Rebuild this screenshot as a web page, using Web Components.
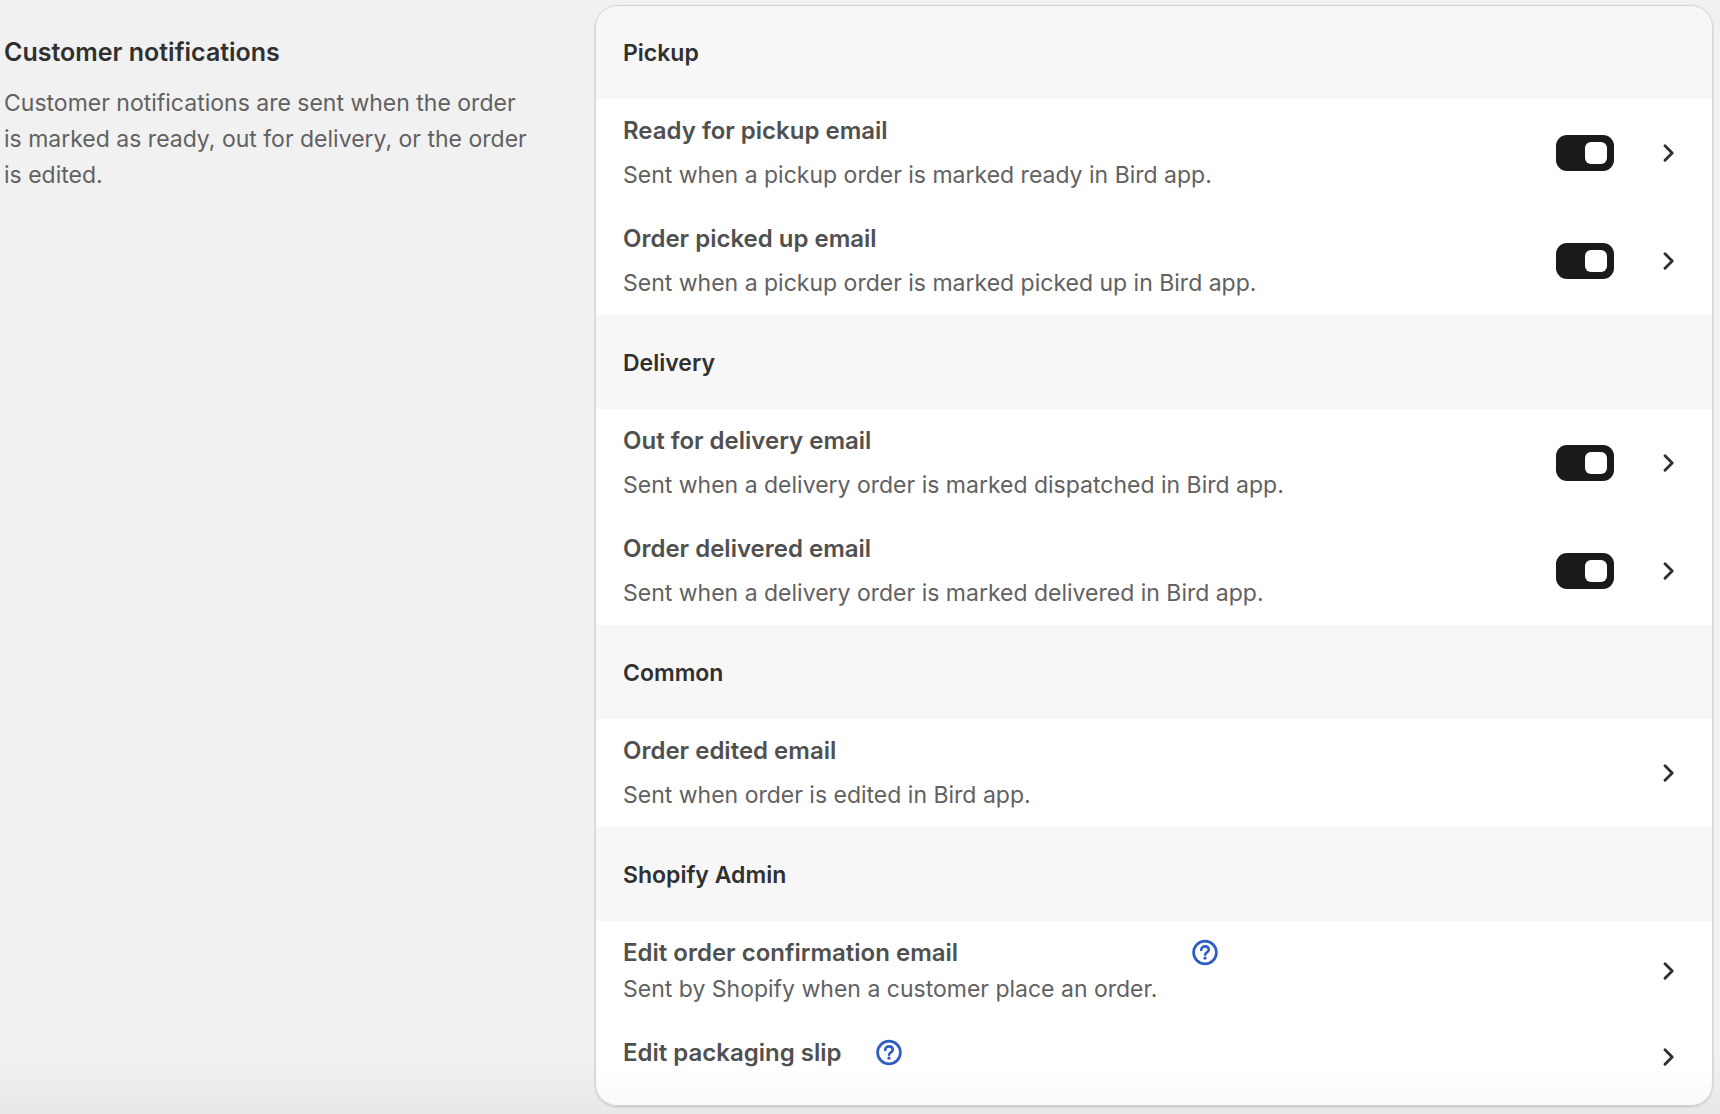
<!DOCTYPE html>
<html lang="en">
<head>
<meta charset="utf-8">
<title>Customer notifications</title>
<style>
  html { height: 100%; }
  body {
    margin: 0;
    min-height: 100%;
    box-sizing: border-box;
    background: linear-gradient(to top, #e8e8e8, #f1f1f1 56px);
    font: 400 23px/36px Inter, "Liberation Sans", sans-serif;
    color: #616161;
  }
</style>
</head>
<body>
<notification-settings>
  <span slot="heading">Customer notifications</span>
  <span slot="summary">Customer notifications are sent when the order is marked as ready, out for delivery, or the order is edited.</span>
  <notification-group>
    <span slot="heading">Pickup</span>
    <notification-row label="Ready for pickup email" toggle>Sent when a pickup order is marked ready in Bird app.</notification-row>
    <notification-row label="Order picked up email" toggle>Sent when a pickup order is marked picked up in Bird app.</notification-row>
  </notification-group>
  <notification-group>
    <span slot="heading">Delivery</span>
    <notification-row label="Out for delivery email" toggle>Sent when a delivery order is marked dispatched in Bird app.</notification-row>
    <notification-row label="Order delivered email" toggle>Sent when a delivery order is marked delivered in Bird app.</notification-row>
  </notification-group>
  <notification-group>
    <span slot="heading">Common</span>
    <notification-row label="Order edited email">Sent when order is edited in Bird app.</notification-row>
  </notification-group>
  <notification-group>
    <span slot="heading">Shopify Admin</span>
    <notification-row label="Edit order confirmation email" help>Sent by Shopify when a customer place an order.</notification-row>
    <notification-row label="Edit packaging slip" help></notification-row>
  </notification-group>
</notification-settings>

<script>
  class NotificationSettings extends HTMLElement {
    constructor() {
      super();
      this.attachShadow({ mode: "open" }).innerHTML = `
        <style>
          :host { display: block; }
          main {
            display: grid;
            grid-template-columns: minmax(0, 1fr) minmax(0, 2fr);
            column-gap: 32px;
            padding: 5px 7px 8px 4px;
          }
          aside { padding: 29px 28px 0 0; }
          h2 { margin: 0 0 15px; font-size: 25px; line-height: 36px; font-weight: 600; color: #303030; }
          p { margin: 0; }
          .card {
            background: linear-gradient(to top, #fafafa, #fff 40px);
            border-radius: 22px;
            overflow: hidden;
            padding-bottom: 13px;
            outline: 1px solid #d4d4d4;
            outline-offset: -1px;
            box-shadow: 0 1px 2px #bdbdbd;
          }
        </style>
        <main>
          <aside>
            <h2><slot name="heading"></slot></h2>
            <p><slot name="summary"></slot></p>
          </aside>
          <section class="card"><slot></slot></section>
        </main>`;
    }
  }

  class NotificationGroup extends HTMLElement {
    constructor() {
      super();
      this.attachShadow({ mode: "open" }).innerHTML = `
        <style>
          :host { display: block; }
          h3 {
            margin: 0;
            padding: 30px 28px 28px;
            background: #f7f7f7;
            color: #303030;
            font-size: 23px;
            line-height: 36px;
            font-weight: 600;
          }
        </style>
        <h3><slot name="heading"></slot></h3>
        <slot></slot>`;
    }
  }

  class ToggleSwitch extends HTMLElement {
    constructor() {
      super();
      this.attachShadow({ mode: "open" }).innerHTML = `
        <style>
          :host { display: flex; }
          input {
            appearance: none;
            display: flex;
            align-items: center;
            box-sizing: border-box;
            width: 58px;
            height: 36px;
            margin: 0;
            padding: 0 7px;
            border-radius: 11px;
            background: #8a8a8a;
            cursor: pointer;
          }
          input::before {
            content: "";
            width: 22px;
            height: 22px;
            border-radius: 6px;
            background: #fff;
          }
          input:checked { justify-content: flex-end; background: #1a1a1a; }
        </style>
        <input type="checkbox" role="switch" checked>`;
      this.shadowRoot.querySelector("input").setAttribute("aria-label", this.getAttribute("label") || "");
    }
  }

  class NotificationRow extends HTMLElement {
    connectedCallback() {
      if (this.shadowRoot) return;
      const label = this.getAttribute("label");
      const help = this.hasAttribute("help");
      this.attachShadow({ mode: "open" }).innerHTML = `
        <style>
          :host { display: flex; align-items: center; gap: 36px; padding: 14px 27px 14px 28px; }
          .info { flex: 1; min-width: 0; min-height: 44px; display: flex; align-items: flex-start; gap: 30px; }
          .text { display: flex; flex-direction: column; gap: 8px; }
          :host([help]) .text { gap: 0; }
          h4 { margin: 0; font-size: 24px; line-height: 36px; font-weight: 600; color: #505050; }
          p { margin: 0; }
          button { border: 0; padding: 0; background: none; display: flex; cursor: pointer; color: #2f5dc4; }
          a { display: flex; color: #303030; }
          svg { width: 36px; height: 36px; fill: none; stroke: currentColor; stroke-linecap: round; stroke-linejoin: round; }
        </style>
        <div class="info">
          <div class="text">
            <h4>${label}</h4>
            ${this.textContent.trim() ? "<p><slot></slot></p>" : ""}
          </div>
          ${help ? `<button type="button" aria-label="About ${label}">
            <svg viewBox="0 0 36 36">
              <circle cx="18" cy="17.5" r="11.4" stroke-width="2.7"/>
              <path d="M14.2 14.9c0-2.1 1.6-3.5 3.8-3.5s3.8 1.4 3.8 3.4c0 2.5-3.7 2.5-3.7 4.9" stroke-width="2.6"/>
              <circle cx="18" cy="23.1" r="1.7" fill="currentColor" stroke="none"/>
            </svg></button>` : ""}
        </div>
        ${this.hasAttribute("toggle") ? `<toggle-switch label="${label}"></toggle-switch>` : ""}
        <a href="#" aria-label="Open ${label}">
          <svg viewBox="0 0 36 36"><path d="M15 10.8l7.2 7.2-7.2 7.2" stroke-width="2.9"/></svg>
        </a>`;
    }
  }

  customElements.define("toggle-switch", ToggleSwitch);
  customElements.define("notification-row", NotificationRow);
  customElements.define("notification-group", NotificationGroup);
  customElements.define("notification-settings", NotificationSettings);
</script>
</body>
</html>
